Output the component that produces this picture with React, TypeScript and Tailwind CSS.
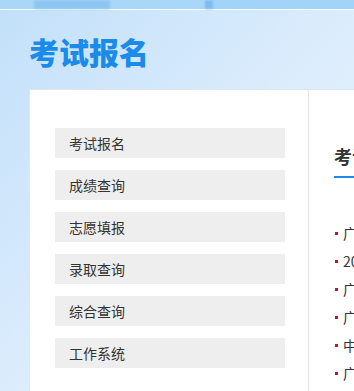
const menu = ["考试报名", "成绩查询", "志愿填报", "录取查询", "综合查询", "工作系统"];

const news = [
  "广东省2024年普通高考报名工作通知",
  "2024年普通高等学校招生考试安排",
  "广东省普通高考考生须知",
  "广东省高职院校招生工作公告",
  "中职生报考高职院校说明",
  "广东省成人高考报名公告",
];

const cjk = "font-['Noto_Sans_CJK_SC','Noto_Sans',sans-serif]";

export default function App() {
  return (
    <div
      className={`w-[354px] h-[391px] overflow-hidden bg-gradient-to-br from-[#c2e0fa] via-[#dbecfc] to-[#eef6fd] ${cjk}`}
    >
      {/* banner strip */}
      <div className="flex h-[9px] bg-[#a9d7f8]">
        <div className="w-[34px]" />
        <div className="w-[76px] bg-[#8ec6f2] blur-[1px]" />
        <div className="w-[95px]" />
        <div className="w-[8px] bg-[#7dbcf0] blur-[1px]" />
        <div className="flex-1 bg-[#a2d3f8]" />
      </div>
      <div className="h-px bg-white" />

      <h1 className="pl-[29px] pt-[21px] pb-[18px] text-[30px] leading-[40px] font-black text-[#1a8be8]">
        考试报名
      </h1>

      <div className="ml-[29px] w-[400px] flex bg-white border border-[#e2e6ea] min-h-[320px]">
        <div className="w-[279px] shrink-0 border-r border-[#e2e6ea] pl-[25px] pr-[23px] pt-[38px] flex flex-col gap-[12px]">
          {menu.map((m) => (
            <div
              key={m}
              className="h-[30px] bg-[#eeeeee] pl-[14px] flex items-center text-[14px] text-[#333]"
            >
              {m}
            </div>
          ))}
        </div>

        <div className="pl-[25px] pt-[53px] flex-1">
          <div className="w-[120px] border-b-2 border-[#1a8be8] pb-[7px]">
            <span className="text-[18px] leading-[26px] font-bold text-[#333] whitespace-nowrap">
              考试动态
            </span>
          </div>
          <ul className="mt-[41px] flex flex-col">
            {news.map((n) => (
              <li
                key={n}
                className="h-[28px] flex items-center gap-[5px] text-[14px] text-[#333] whitespace-nowrap"
              >
                <span className="ml-[1px] w-[3px] h-[3px] bg-[#c8102e] shrink-0" />
                {n}
              </li>
            ))}
          </ul>
        </div>
      </div>
    </div>
  );
}
